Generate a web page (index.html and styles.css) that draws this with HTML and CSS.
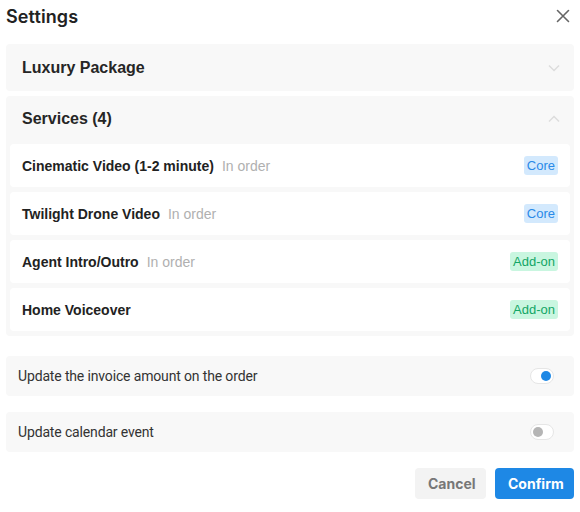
FILE: index.html
```html
<!DOCTYPE html>
<html>
<head>
<meta charset="utf-8">
<link rel="stylesheet" href="styles.css">
</head>
<body>
<div class="dialog">
  <div class="header">
    <h1 class="title">Settings</h1>
    <button class="close" aria-label="Close">
      <svg width="14" height="14" viewBox="0 0 14 14"><path d="M1.5 1.5L12.5 12.5M12.5 1.5L1.5 12.5" stroke="#666" stroke-width="1.6" stroke-linecap="round"/></svg>
    </button>
  </div>

  <div class="panel collapsed">
    <div class="panel-head">
      <span class="panel-title">Luxury Package</span>
      <svg class="chev" width="12" height="8" viewBox="0 0 12 8"><path d="M1 1.5L6 6.5L11 1.5" fill="none" stroke="#dcdcdc" stroke-width="1.4"/></svg>
    </div>
  </div>

  <div class="panel open">
    <div class="panel-head">
      <span class="panel-title">Services (4)</span>
      <svg class="chev" width="12" height="8" viewBox="0 0 12 8"><path d="M1 6.5L6 1.5L11 6.5" fill="none" stroke="#dcdcdc" stroke-width="1.4"/></svg>
    </div>
    <div class="items">
      <div class="item"><span class="name">Cinematic Video (1-2 minute)</span><span class="status">In order</span><span class="badge core">Core</span></div>
      <div class="item"><span class="name">Twilight Drone Video</span><span class="status">In order</span><span class="badge core">Core</span></div>
      <div class="item"><span class="name">Agent Intro/Outro</span><span class="status">In order</span><span class="badge addon">Add-on</span></div>
      <div class="item"><span class="name">Home Voiceover</span><span class="badge addon">Add-on</span></div>
    </div>
  </div>

  <div class="options">
    <div class="option"><span>Update the invoice amount on the order</span><span class="toggle on"><span class="knob"></span></span></div>
    <div class="option"><span>Update calendar event</span><span class="toggle"><span class="knob"></span></span></div>
  </div>

  <div class="footer">
    <button class="btn cancel">Cancel</button>
    <button class="btn confirm">Confirm</button>
  </div>
</div>
</body>
</html>
```

FILE: styles.css
```css
* { box-sizing: border-box; }
html, body { margin: 0; padding: 0; background: #fff; }
body { font-family: Inter, "Liberation Sans", Arial, sans-serif; color: #222; }

.dialog { width: 580px; padding: 0 6px 0 6px; }

.header {
  height: 32px;
  display: flex;
  align-items: center;
  justify-content: space-between;
  margin-bottom: 12px;
}
.title { margin: 0; font-size: 18px; font-weight: 600; color: #222; letter-spacing: 0.1px; }
.close {
  border: 0; background: none; padding: 0; margin-right: 4px;
  width: 14px; height: 14px; display: flex;
}

.panel { background: #f8f8f8; border-radius: 4px; width: 568px; }
.panel + .panel { margin-top: 5px; }
.panel-head {
  display: flex; align-items: center; justify-content: space-between;
  padding: 0 14px 0 16px;
}
.collapsed .panel-head { height: 47px; }
.open .panel-head { height: 47px; padding-bottom: 1px; }
.panel-title {
  font-family: "Liberation Sans", Arial, sans-serif;
  font-size: 16px; font-weight: 700; color: #262626;
}

.items { display: flex; flex-direction: column; gap: 5px; padding: 1px 4px 5px 4px; }
.item {
  background: #fff; border-radius: 4px; height: 43px;
  display: flex; align-items: center; padding: 0 12px 0 12px;
  font-family: "Liberation Sans", Arial, sans-serif;
}
.name { font-size: 14px; font-weight: 700; color: #222; }
.status { font-size: 14px; color: #b0b0b0; margin-left: 8px; }
.badge {
  margin-left: auto; font-size: 13px; height: 19px; line-height: 19px;
  padding: 0 3px; border-radius: 3px;
}
.badge.core { background: #d3e9fd; color: #2a8ae8; }
.badge.addon { background: #c9f6e0; color: #12a666; }

.options { margin-top: 20px; display: flex; flex-direction: column; gap: 16px; }
.option {
  background: #f8f8f8; border-radius: 4px; height: 40px; width: 568px;
  display: flex; align-items: center; justify-content: space-between;
  padding: 0 20px 0 12px; font-family: Roboto, Inter, sans-serif; font-size: 14px;
  letter-spacing: -0.15px; color: #333;
}
.toggle {
  width: 24px; height: 16px; border-radius: 8px; background: #fff;
  border: 1px solid #e6e6e6; display: flex; align-items: center;
  padding: 0 2px;
}
.knob { width: 10px; height: 10px; border-radius: 50%; background: #b5b5b5; }
.toggle.on { justify-content: flex-end; }
.toggle.on .knob { background: #1e88e5; }

.footer { display: flex; justify-content: flex-end; gap: 9px; margin-top: 16px; }
.btn {
  height: 31px; border: 0; border-radius: 4px; font-family: Inter, sans-serif;
  font-size: 14px; font-weight: 700; padding: 0 13px; cursor: pointer;
}
.cancel { background: #f3f3f3; color: #777; width: 71px; }
.confirm { background: #1e88e5; color: #fff; width: 79px; }
```
